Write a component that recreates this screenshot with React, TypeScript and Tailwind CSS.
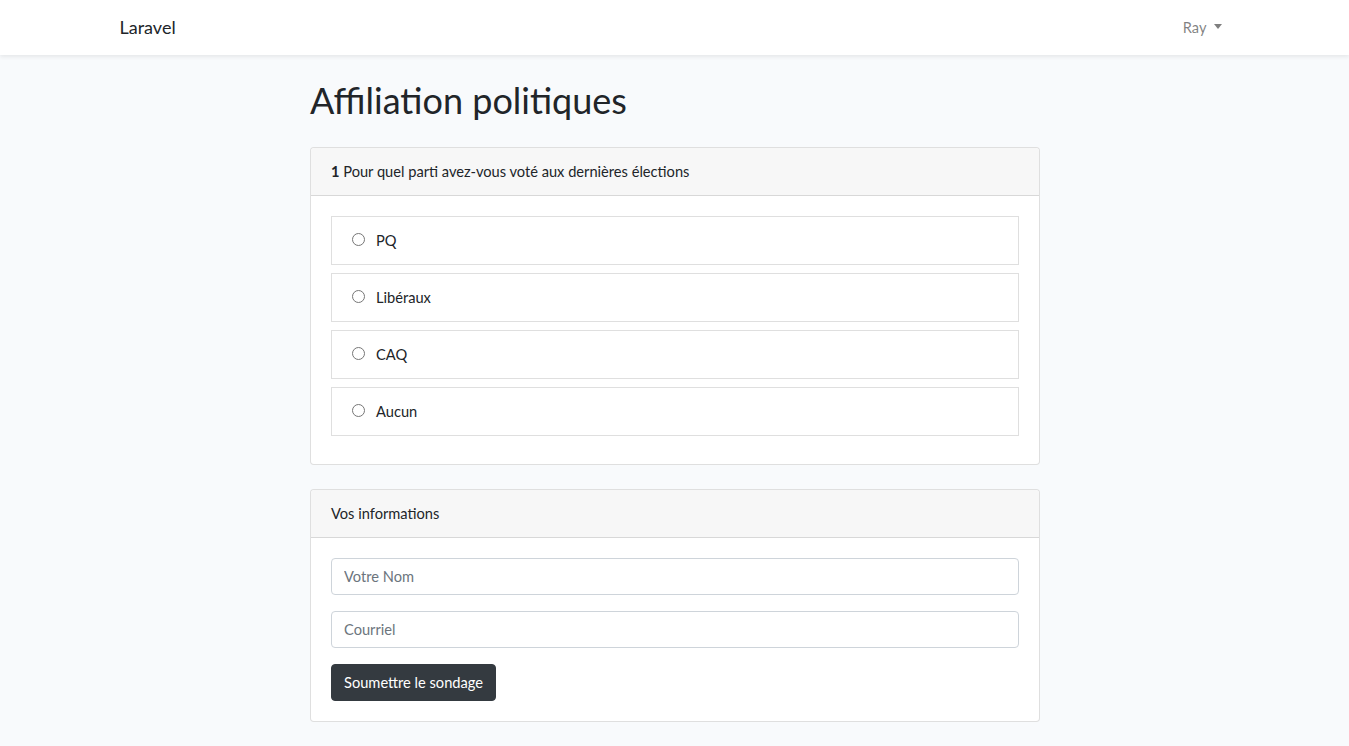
import React from "react";

export default function App() {
  const options = ["PQ", "Libéraux", "CAQ", "Aucun"];
  return (
    <div className="min-h-[746px] bg-[#f8fafc] text-[#212529] text-[14.65px] leading-[23px]" style={{ fontFamily: "Lato, 'Noto Sans', sans-serif" }}>
      <nav className="bg-white h-[55px] shadow-[0_2px_4px_rgba(0,0,0,0.075)]">
        <div className="w-[1140px] mx-auto px-[15px] h-full flex items-center justify-between">
          <span className="text-[18px] leading-[1.6] text-[#212529]">Laravel</span>
          <span className="flex items-center px-2 text-[rgba(0,0,0,0.5)]">
            Ray
            <span className="ml-[7px] inline-block w-0 h-0 border-l-[4.5px] border-r-[4.5px] border-t-[5px] border-l-transparent border-r-transparent border-t-[rgba(0,0,0,0.5)] mb-[2px]"></span>
          </span>
        </div>
      </nav>
      <main className="pt-[24px] pb-[24px]">
        <div className="w-[730px] ml-[310px]">
          <h1 className="text-[36px] leading-[1.2] font-normal mb-[25px] mt-[0px]">Affiliation politiques</h1>
          <div className="bg-white border border-[rgba(0,0,0,0.125)] rounded-[4px] mb-[24px]">
            <div className="bg-[#f7f7f7] border-b border-[rgba(0,0,0,0.125)] px-[20px] py-[12px] rounded-t-[4px]">
              <strong className="font-bold">1</strong> Pour quel parti avez-vous voté aux dernières élections
            </div>
            <div className="p-[20px] pb-[28px] flex flex-col gap-[8px]">
              {options.map((o) => (
                <label key={o} className="flex items-center border border-[rgba(0,0,0,0.125)] px-[20px] py-[12px] bg-white">
                  <input type="radio" name="q1" className="w-[13px] h-[13px] m-0 mr-[11px] mt-[-3px]" />
                  <span>{o}</span>
                </label>
              ))}
            </div>
          </div>
          <div className="bg-white border border-[rgba(0,0,0,0.125)] rounded-[4px]">
            <div className="bg-[#f7f7f7] border-b border-[rgba(0,0,0,0.125)] px-[20px] py-[12px] rounded-t-[4px]">
              Vos informations
            </div>
            <div className="p-[20px] flex flex-col">
              <input placeholder="Votre Nom" className="h-[37px] w-full border border-[#ced4da] rounded-[4px] px-[12px] placeholder:text-[#6c757d] mb-[16px] outline-none" />
              <input placeholder="Courriel" className="h-[37px] w-full border border-[#ced4da] rounded-[4px] px-[12px] placeholder:text-[#6c757d] mb-[16px] outline-none" />
              <div>
                <button className="bg-[#343a40] text-white rounded-[4px] h-[37px] px-[12px] border border-[#343a40]">Soumettre le sondage</button>
              </div>
            </div>
          </div>
        </div>
      </main>
    </div>
  );
}
